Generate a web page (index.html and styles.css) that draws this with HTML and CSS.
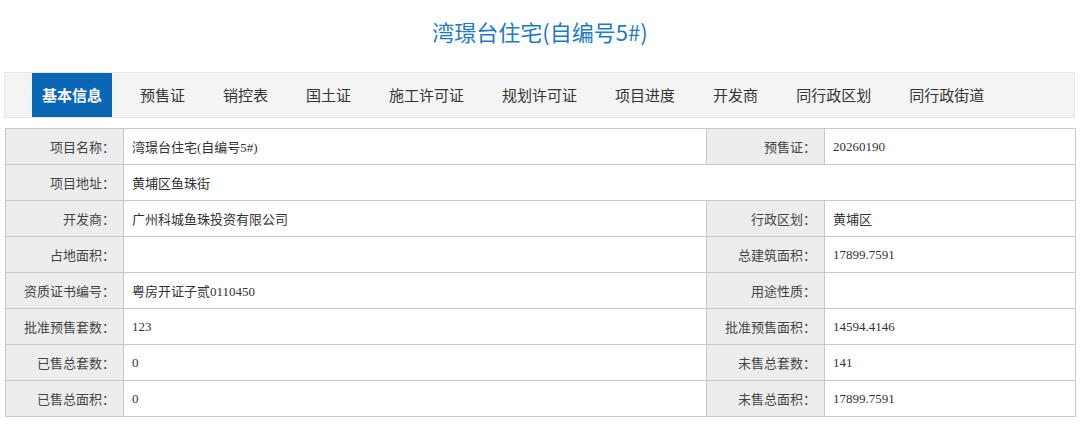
FILE: index.html
```html
<!DOCTYPE html>
<html lang="zh-CN">
<head>
    <meta charset="UTF-8">
    <meta name="viewport" content="width=device-width, initial-scale=1.0">
    <title>湾璟台住宅(自编号5#)</title>
    <link rel="stylesheet" href="styles.css">
</head>
<body>
    <h1 class="title">湾璟台住宅(自编号5#)</h1>

    <ul class="tabs">
        <li class="tab active">基本信息</li>
        <li class="tab">预售证</li>
        <li class="tab">销控表</li>
        <li class="tab">国土证</li>
        <li class="tab">施工许可证</li>
        <li class="tab">规划许可证</li>
        <li class="tab">项目进度</li>
        <li class="tab">开发商</li>
        <li class="tab">同行政区划</li>
        <li class="tab">同行政街道</li>
    </ul>

    <table class="info-table">
        <colgroup>
            <col class="col-label">
            <col class="col-main">
            <col class="col-label">
            <col class="col-side">
        </colgroup>
        <tr>
            <th>项目名称：</th>
            <td>湾璟台住宅(自编号5#)</td>
            <th>预售证：</th>
            <td>20260190</td>
        </tr>
        <tr>
            <th>项目地址：</th>
            <td colspan="3">黄埔区鱼珠街</td>
        </tr>
        <tr>
            <th>开发商：</th>
            <td>广州科城鱼珠投资有限公司</td>
            <th>行政区划：</th>
            <td>黄埔区</td>
        </tr>
        <tr>
            <th>占地面积：</th>
            <td></td>
            <th>总建筑面积：</th>
            <td>17899.7591</td>
        </tr>
        <tr>
            <th>资质证书编号：</th>
            <td>粤房开证子贰0110450</td>
            <th>用途性质：</th>
            <td></td>
        </tr>
        <tr>
            <th>批准预售套数：</th>
            <td>123</td>
            <th>批准预售面积：</th>
            <td>14594.4146</td>
        </tr>
        <tr>
            <th>已售总套数：</th>
            <td>0</td>
            <th>未售总套数：</th>
            <td>141</td>
        </tr>
        <tr>
            <th>已售总面积：</th>
            <td>0</td>
            <th>未售总面积：</th>
            <td>17899.7591</td>
        </tr>
    </table>
</body>
</html>
```

FILE: styles.css
```css
* {
    margin: 0;
    padding: 0;
    box-sizing: border-box;
}

body {
    font-family: "Noto Sans CJK SC", "Noto Sans", sans-serif;
    background: #fff;
    color: #333;
    width: 1080px;
}

.title {
    padding-top: 17px;
    height: 72px;
    line-height: 28px;
    text-align: center;
    font-size: 22px;
    font-weight: 400;
    color: #1c7bc7;
}

.tabs {
    display: flex;
    list-style: none;
    margin: 0 5px 0 4px;
    padding-left: 27px;
    height: 46px;
    background: #f4f4f4;
    border: 1px solid #e6e6e6;
}

.tab {
    padding: 0 10px;
    margin-right: 18px;
    line-height: 44px;
    font-size: 15px;
    color: #333;
    white-space: nowrap;
}

.tab.active {
    background: #0a67b5;
    color: #fff;
    font-weight: 700;
}

.info-table {
    margin: 10px 0 0 5px;
    width: 1070px;
    table-layout: fixed;
    border-collapse: collapse;
    border: 1px solid #b8b8b8;
    font-family: "Liberation Serif", "Noto Sans CJK SC", serif;
    font-size: 13px;
}

.col-label { width: 118px; }
.col-main { width: 583px; }
.col-side { width: 251px; }

.info-table th,
.info-table td {
    height: 36px;
    border: 1px solid #c8c8c8;
    vertical-align: middle;
    white-space: nowrap;
}

.info-table th {
    background: #ededed;
    text-align: right;
    padding-right: 8px;
    font-weight: 400;
    font-family: "Noto Sans CJK SC", sans-serif;
    color: #444;
}

.info-table td {
    padding-left: 8px;
    color: #333;
}
```
